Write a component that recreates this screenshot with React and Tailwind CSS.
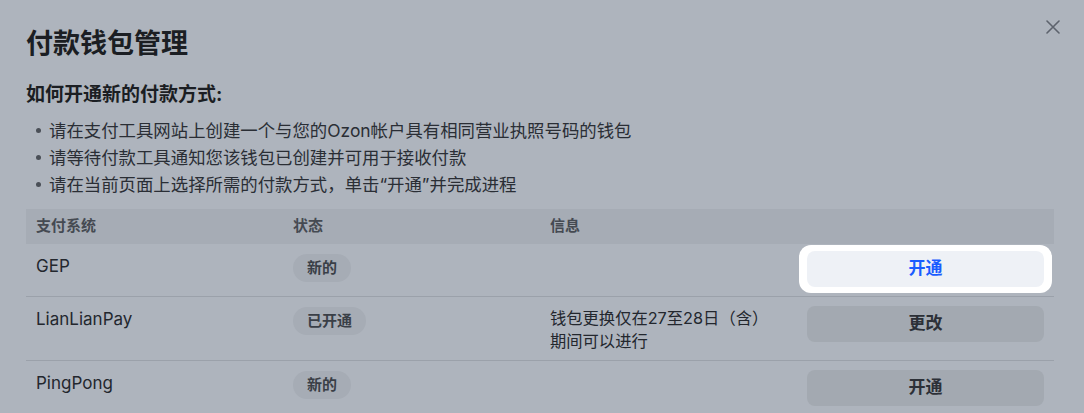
const rows = [
  { name: 'GEP', status: '新的', info: null, action: '开通', focus: true, h: 'h-[53px]' },
  {
    name: 'LianLianPay',
    status: '已开通',
    info: ['钱包更换仅在27至28日（含）', '期间可以进行'],
    action: '更改',
    h: 'h-[64px]',
  },
  { name: 'PingPong', status: '新的', info: null, action: '开通', h: 'h-[60px]', last: true },
];

const steps = [
  '请在支付工具网站上创建一个与您的Ozon帐户具有相同营业执照号码的钱包',
  '请等待付款工具通知您该钱包已创建并可用于接收付款',
  '请在当前页面上选择所需的付款方式，单击“开通”并完成进程',
];

const CloseIcon = () => (
  <svg width="14" height="14" viewBox="0 0 14 14" fill="none">
    <path d="M1 1L13 13M13 1L1 13" stroke="#5d636d" strokeWidth="1.6" strokeLinecap="round" />
  </svg>
);

const App = () => {
  return (
    <div
      className="relative w-[1084px] h-[413px] overflow-hidden bg-[#aeb4bd] pl-[26px] pr-[30px] text-[#23272e]"
      style={{ fontFamily: "Inter, 'Noto Sans CJK SC', sans-serif" }}
    >
      {/* close button */}
      <button className="absolute right-[24px] top-[20px] flex h-[14px] w-[14px] items-center justify-center">
        <CloseIcon />
      </button>

      <h1 className="pt-[24px] text-[27px] leading-[40px] font-bold text-[#1b1e23]">付款钱包管理</h1>

      <h2 className="mt-[17px] text-[19px] leading-[27px] font-bold text-[#1b1e23]">如何开通新的付款方式:</h2>

      <ul className="mt-[9px] text-[17.4px] leading-[27px] text-[#2a2e35]">
        {steps.map((s) => (
          <li key={s} className="flex items-center">
            <span className="ml-[10px] mr-[8px] h-[5px] w-[5px] rounded-full bg-[#4a4f57]" />
            {s}
          </li>
        ))}
      </ul>

      {/* table */}
      <div className="mt-[11px]">
        <div className="grid h-[35px] grid-cols-4 items-center bg-[#a6acb5] text-[15px] font-semibold text-[#454a52]">
          <div className="px-[10px]">支付系统</div>
          <div className="px-[10px]">状态</div>
          <div className="px-[10px]">信息</div>
          <div className="px-[10px]" />
        </div>

        {rows.map((r) => (
          <div
            key={r.name}
            className={`grid grid-cols-4 items-start ${r.h} ${r.last ? '' : 'border-b border-[#9ba1aa]'}`}
          >
            <div className="px-[10px] pt-[10px] text-[17px] leading-[24px]">{r.name}</div>
            <div className="px-[10px] pt-[10px]">
              <span className="inline-flex h-[28px] items-center rounded-full bg-[#a6acb5] px-[14px] text-[15px] font-semibold text-[#3a3f47]">
                {r.status}
              </span>
            </div>
            <div className="px-[10px] pt-[10px] text-[16.3px] leading-[23px] text-[#23272e]">
              {r.info && r.info.map((line) => <div key={line}>{line}</div>)}
            </div>
            <div className="px-[10px] pt-[9px]">
              {r.focus ? (
                <div className="-m-[8px] rounded-[12px] bg-white p-[6px_8px]">
                  <button className="flex h-[36px] w-full items-center justify-center rounded-[8px] bg-[#eef1f6] text-[17px] font-semibold text-[#1a5cff]">
                    {r.action}
                  </button>
                </div>
              ) : (
                <button className="flex h-[36px] w-full items-center justify-center rounded-[8px] bg-[#a3a9b1] text-[17px] font-semibold text-[#2c3037]">
                  {r.action}
                </button>
              )}
            </div>
          </div>
        ))}
      </div>
    </div>
  );
};

export default App;
